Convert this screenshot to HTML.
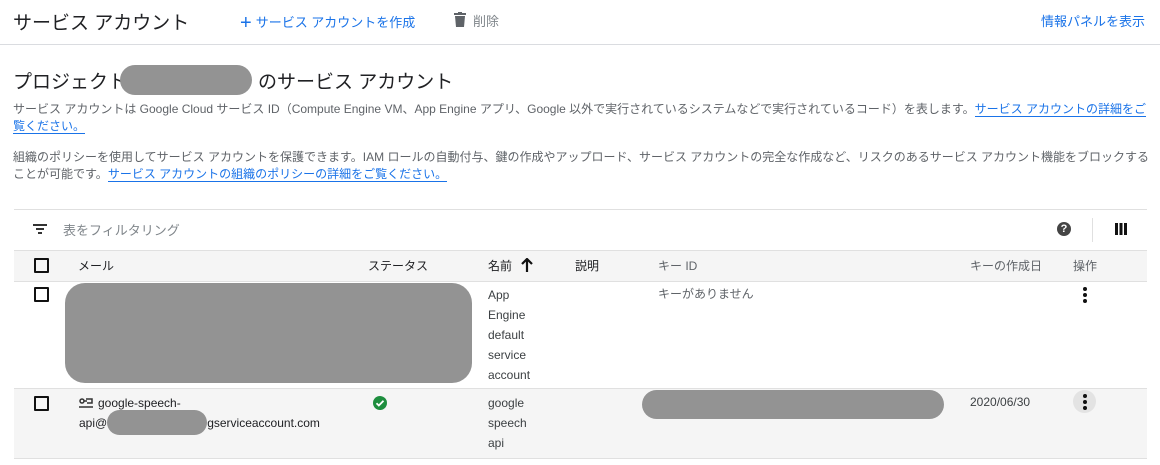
<!DOCTYPE html>
<html><head><meta charset="utf-8"><style>
body{margin:0;width:1160px;height:465px;background:#fff;font-family:"Liberation Sans","Noto Sans CJK JP",sans-serif;color:#202124;position:relative;overflow:hidden}
.a{position:absolute;white-space:nowrap}
.blur{position:absolute;background:#939393;border-radius:999px}
.cb{position:absolute;width:11px;height:11px;border:2px solid #111;border-radius:1px}
a{color:#1a73e8;text-decoration:none;border-bottom:1px solid #1a73e8}
.s{font-size:13px;color:#5f6368}
.dots{position:absolute;width:4px}
.dots i{display:block;width:4px;height:4px;border-radius:50%;background:#111;margin-bottom:2px}
</style></head><body>
<div style="position:absolute;left:0;top:0;width:1160px;height:44px;border-bottom:1px solid #dadce0"></div>
<div class="a" style="left:13px;top:8px;font-size:19px;color:#202124">サービス アカウント</div>
<div class="a" style="left:240px;top:10px;font-size:13px;color:#1a73e8"><span style="font-size:20px;position:relative;top:2px;margin-right:4px">+</span>サービス アカウントを作成</div>
<svg class="a" style="left:454px;top:12px" width="12" height="15" viewBox="0 0 12 15"><rect x="0" y="1" width="12" height="2" fill="#5f6368"/><rect x="4" y="0" width="4" height="2" fill="#5f6368"/><path d="M1 4h10l-1 11H2z" fill="#5f6368"/></svg>
<div class="a" style="left:473px;top:11px;font-size:13px;color:#80868b">削除</div>
<div class="a" style="left:1041px;top:11px;font-size:13px;color:#1a73e8">情報パネルを表示</div>

<div class="a" style="left:13px;top:67px;font-size:19px">プロジェクト</div>
<div class="blur" style="left:120px;top:65px;width:132px;height:30px"></div>
<div class="a" style="left:258px;top:67px;font-size:19px">のサービス アカウント</div>
<div class="a s" style="left:13px;top:101px;font-size:12px;line-height:17px">サービス アカウントは Google Cloud サービス ID（Compute Engine VM、App Engine アプリ、Google 以外で実行されているシステムなどで実行されているコード）を表します。<a>サービス アカウントの詳細をご</a><br><a>覧ください。</a></div>
<div class="a s" style="left:13px;top:149px;font-size:12px;line-height:17px">組織のポリシーを使用してサービス アカウントを保護できます。IAM ロールの自動付与、鍵の作成やアップロード、サービス アカウントの完全な作成など、リスクのあるサービス アカウント機能をブロックする<br>ことが可能です。<a>サービス アカウントの組織のポリシーの詳細をご覧ください。</a></div>

<div style="position:absolute;left:14px;top:209px;width:1133px;height:1px;background:#e0e0e0"></div>
<svg class="a" style="left:33px;top:224px" width="14" height="10"><rect x="0" y="0" width="14" height="2" fill="#333"/><rect x="3" y="4" width="8" height="2" fill="#333"/><rect x="5" y="8" width="4" height="2" fill="#333"/></svg>
<div class="a" style="left:63px;top:220px;font-size:13px;color:#80868b">表をフィルタリング</div>
<div class="a" style="left:1057px;top:222px;width:14px;height:14px;border-radius:50%;background:#444;color:#fff;font-size:11px;font-weight:bold;text-align:center;line-height:14px">?</div>
<div style="position:absolute;left:1092px;top:218px;width:1px;height:24px;background:#e0e0e0"></div>
<div class="a" style="left:1115px;top:223px;width:12px;height:12px;background:repeating-linear-gradient(90deg,#111 0 3px,transparent 3px 4.5px)"></div>

<div style="position:absolute;left:14px;top:250px;width:1133px;height:30px;background:#f5f5f5;border-top:1px solid #e0e0e0;border-bottom:1px solid #e0e0e0"></div>
<div class="cb" style="left:34px;top:258px"></div>
<div class="a" style="left:78px;top:257px;font-size:12px">メール</div>
<div class="a" style="left:368px;top:257px;font-size:12px">ステータス</div>
<div class="a" style="left:488px;top:257px;font-size:12px">名前</div>
<svg class="a" style="left:521px;top:258px" width="12" height="14" viewBox="0 0 12 14"><path d="M6 1v13M1 6l5-5 5 5" stroke="#111" stroke-width="2.2" fill="none"/></svg>
<div class="a" style="left:575px;top:257px;font-size:12px">説明</div>
<div class="a" style="left:658px;top:257px;font-size:12px;color:#5f6368">キー ID</div>
<div class="a" style="left:970px;top:257px;font-size:12px;color:#5f6368">キーの作成日</div>
<div class="a" style="left:1073px;top:257px;font-size:12px;color:#5f6368">操作</div>

<div class="cb" style="left:34px;top:287px"></div>
<div class="blur" style="left:65px;top:283px;width:407px;height:100px;border-radius:20px"></div>
<div class="a" style="left:488px;top:285px;font-size:12px;line-height:20px;color:#3c4043">App<br>Engine<br>default<br>service<br>account</div>
<div class="a" style="left:658px;top:285px;font-size:12px;color:#5f6368">キーがありません</div>
<div class="dots" style="left:1083px;top:287px"><i></i><i></i><i></i></div>

<div style="position:absolute;left:14px;top:388px;width:1133px;height:69px;background:#f5f5f5;border-top:1px solid #e0e0e0;border-bottom:1px solid #e0e0e0"></div>
<div class="cb" style="left:34px;top:396px"></div>
<svg class="a" style="left:79px;top:398px" width="14" height="12" viewBox="0 0 14 12"><circle cx="3" cy="3" r="2" stroke="#333" stroke-width="1.5" fill="none"/><path d="M5 3h3M0 9h14M7 1h6v4H8" stroke="#333" stroke-width="1.5" fill="none"/></svg>
<div class="a" style="left:79px;top:393px;font-size:12px;line-height:20px;color:#202124"><span style="display:inline-block;width:19px"></span>google-speech-<br>api@<span style="display:inline-block;width:100px"></span>gserviceaccount.com</div>
<div class="blur" style="left:107px;top:410px;width:100px;height:25px"></div>
<svg class="a" style="left:373px;top:396px" width="14" height="14" viewBox="0 0 14 14"><circle cx="7" cy="7" r="7" fill="#1e8e3e"/><path d="M3.5 7.2l2.3 2.3 4.7-4.7" stroke="#fff" stroke-width="1.8" fill="none"/></svg>
<div class="a" style="left:488px;top:393px;font-size:12px;line-height:20px;color:#3c4043">google<br>speech<br>api</div>
<div class="blur" style="left:642px;top:390px;width:302px;height:29px"></div>
<div class="a" style="left:970px;top:395px;font-size:12px;color:#3c4043">2020/06/30</div>
<div class="a" style="left:1073px;top:390px;width:23px;height:23px;border-radius:50%;background:#e3e3e3"></div>
<div class="dots" style="left:1083px;top:394px"><i></i><i></i><i></i></div>
</body></html>
